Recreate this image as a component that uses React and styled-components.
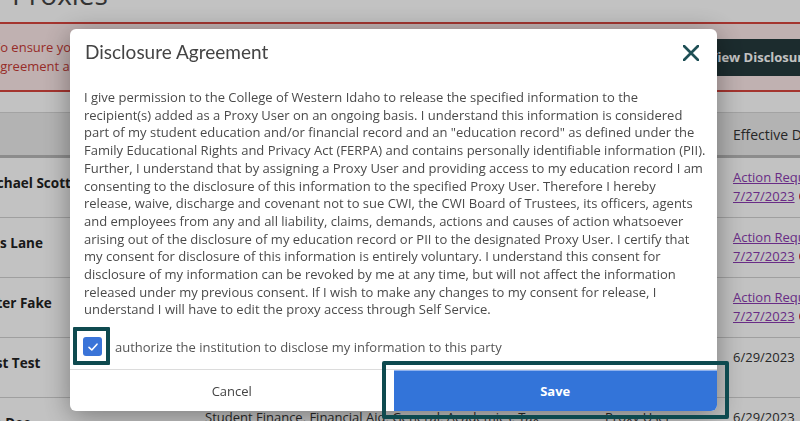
import React from 'react';
import styled, { createGlobalStyle } from 'styled-components';

const GlobalStyle = createGlobalStyle`
  html, body {
    margin: 0;
    padding: 0;
    width: 800px;
    height: 421px;
    overflow: hidden;
    background: #fff;
  }
  body {
    font-family: "Open Sans", "Liberation Sans", sans-serif;
  }
`;

const Page = styled.div`
  width: 1100px;
  margin: -30px 0 0 -30px;
  color: #333;
`;

const PageTitle = styled.h1`
  margin: 0;
  padding: 7px 0 0 42px;
  font-size: 28px;
  line-height: 34px;
  font-weight: 400;
  color: #444;
`;

const Alert = styled.div`
  margin-top: 11px;
  display: flex;
  align-items: center;
  height: 66px;
  padding-left: 23px;
  background: #fde9e9;
  border-top: 2px solid #d8463f;
  border-bottom: 2px solid #d8463f;
`;

const AlertText = styled.div`
  flex: 0 0 702px;
  font-size: 13px;
  line-height: 19px;
  color: #c73a35;
  white-space: nowrap;
`;

const DarkButton = styled.button`
  height: 37px;
  padding: 0 14px;
  border: none;
  border-radius: 3px;
  background: #253a3d;
  color: #fff;
  font-family: inherit;
  font-size: 13px;
  font-weight: 700;
  white-space: nowrap;
`;

const Table = styled.div`
  margin-top: 20px;
`;

const HeaderRow = styled.div`
  display: grid;
  grid-template-columns: 225px 400px 128px 1fr;
  padding-left: 10px;
  height: 42px;
  align-items: center;
  background: #ececec;
  border-top: 1px solid #d6d6d6;
  border-bottom: 3px solid #b9b9b9;
  font-size: 14px;
  color: #333;
`;

const Row = styled.div`
  display: grid;
  grid-template-columns: 225px 400px 128px 1fr;
  padding-left: 10px;
  height: 59px;
  border-bottom: 1px solid #d2d2d2;
  align-items: start;
`;

const Cell = styled.div`
  padding-top: 10px;
  font-size: 13px;
  line-height: 19px;
  color: #333;
  white-space: nowrap;
`;

const Name = styled(Cell)`
  padding-top: 16px;
  font-size: 13.5px;
  font-weight: 700;
  color: #222;
`;

const LinkLine = styled.div`
  display: flex;
  align-items: center;
  gap: 4px;
`;

const Link = styled.a`
  color: #8a3bb0;
  text-decoration: underline;
`;

const WarnDot = styled.span`
  display: inline-block;
  width: 13px;
  height: 13px;
  border-radius: 50%;
  background: #e0352e;
`;

const Overlay = styled.div`
  position: fixed;
  inset: 0;
  background: rgba(0, 0, 0, 0.24);
`;

const Modal = styled.div`
  position: fixed;
  left: 70px;
  top: 29px;
  width: 647px;
  background: #fff;
  border-radius: 6px;
  box-shadow: 0 5px 28px rgba(0, 0, 0, 0.38);
`;

const ModalHeader = styled.div`
  display: flex;
  align-items: center;
  justify-content: space-between;
  padding: 11px 18px 0 15px;
  height: 24px;
`;

const ModalTitle = styled.h2`
  margin: 0;
  font-family: "Lato", "Open Sans", sans-serif;
  font-size: 19px;
  line-height: 24px;
  font-weight: 400;
  color: #444;
`;

const CloseButton = styled.button`
  display: flex;
  padding: 0;
  border: none;
  background: none;
  margin-top: 2px;
`;

const ModalBody = styled.div`
  padding: 25px 14px 0 14px;
  font-size: 13px;
  line-height: 17.7px;
  color: #4a4a4a;
`;

const Line = styled.span`
  display: block;
  white-space: nowrap;
`;

const ConsentRow = styled.label`
  display: flex;
  align-items: center;
  height: 45px;
  margin-top: 5px;
  padding-left: 13px;
  font-size: 13px;
  color: #555;
`;

const Checkbox = styled.span`
  position: relative;
  display: flex;
  align-items: center;
  justify-content: center;
  width: 19px;
  height: 19px;
  border-radius: 3px;
  background: #3a74d8;
  margin-right: 13px;

  &::after {
    content: '';
    position: absolute;
    top: -10px;
    bottom: -9px;
    left: -10px;
    right: -8px;
    border: 4px solid #0e4a4f;
    border-radius: 1px;
  }
`;

const Footer = styled.div`
  display: grid;
  grid-template-columns: 1fr 1fr;
  height: 41px;
  border-top: 1px solid #dcdcdc;
`;

const FooterButton = styled.button`
  position: relative;
  border: none;
  font-family: "Open Sans", "Liberation Sans", sans-serif;
  font-size: 13px;
  background: ${(p) => (p.$primary ? '#3374d9' : 'transparent')};
  color: ${(p) => (p.$primary ? '#fff' : '#444')};
  font-weight: ${(p) => (p.$primary ? 700 : 400)};
  border-radius: ${(p) => (p.$primary ? '0 0 6px 0' : '0 0 0 6px')};
  border-top: ${(p) => (p.$primary ? '1px solid #8fb2ee' : 'none')};

  &::after {
    content: '';
    display: ${(p) => (p.$primary ? 'block' : 'none')};
    position: absolute;
    top: -10px;
    bottom: -8px;
    left: -12px;
    right: -12px;
    border: 4px solid #0e4a4f;
    border-radius: 2px;
  }
`;

const rows = [
  { name: 'Michael Scott', access: 'Student Finance, Financial Aid', action: true },
  { name: 'Lois Lane', access: 'Student Finance', action: true },
  { name: 'Peter Fake', access: 'Financial Aid, General', action: true },
  { name: 'Test Test', access: 'General, Academics', date: '6/29/2023' },
  { name: 'Jon Dee', access: 'Student Finance, Financial Aid, General, Academics, Tax', date: '6/29/2023' },
];

const agreement = [
  'I give permission to the College of Western Idaho to release the specified information to the',
  'recipient(s) added as a Proxy User on an ongoing basis. I understand this information is considered',
  'part of my student education and/or financial record and an "education record" as defined under the',
  'Family Educational Rights and Privacy Act (FERPA) and contains personally identifiable information (PII).',
  'Further, I understand that by assigning a Proxy User and providing access to my education record I am',
  'consenting to the disclosure of this information to the specified Proxy User. Therefore I hereby',
  'release, waive, discharge and covenant not to sue CWI, the CWI Board of Trustees, its officers, agents',
  'and employees from any and all liability, claims, demands, actions and causes of action whatsoever',
  'arising out of the disclosure of my education record or PII to the designated Proxy User. I certify that',
  'my consent for disclosure of this information is entirely voluntary. I understand this consent for',
  'disclosure of my information can be revoked by me at any time, but will not affect the information',
  'released under my previous consent. If I wish to make any changes to my consent for release, I',
  'understand I will have to edit the proxy access through Self Service.',
];

function App() {
  return (
    <>
      <GlobalStyle />
      <Page>
        <PageTitle>Proxies</PageTitle>
        <Alert>
          <AlertText>
            To ensure your proxies keep their access, please review the disclosure
            <br />
            agreement and save it for each proxy that requires action.
          </AlertText>
          <DarkButton>View Disclosure Agreement</DarkButton>
        </Alert>
        <Table>
          <HeaderRow>
            <div />
            <div>Access</div>
            <div>Role</div>
            <div>Effective Date</div>
          </HeaderRow>
          {rows.map((row, idx) => (
            <Row key={idx}>
              <Name>{row.name}</Name>
              <Cell>{row.access}</Cell>
              <Cell>Proxy User</Cell>
              <Cell>
                {row.action ? (
                  <>
                    <LinkLine>
                      <Link>Action Required</Link>
                    </LinkLine>
                    <LinkLine>
                      <Link>7/27/2023</Link>
                      <WarnDot />
                    </LinkLine>
                  </>
                ) : (
                  row.date
                )}
              </Cell>
            </Row>
          ))}
        </Table>
      </Page>
      <Overlay />
      <Modal>
        <ModalHeader>
          <ModalTitle>Disclosure Agreement</ModalTitle>
          <CloseButton aria-label="Close">
            <svg width="16" height="16" viewBox="0 0 16 16">
              <path d="M1 1 L15 15 M15 1 L1 15" stroke="#1e4f55" strokeWidth="2.7" strokeLinecap="round" />
            </svg>
          </CloseButton>
        </ModalHeader>
        <ModalBody>
          {agreement.map((line, idx) => (
            <Line key={idx}>{line}</Line>
          ))}
        </ModalBody>
        <ConsentRow>
          <Checkbox>
            <svg width="12" height="12" viewBox="0 0 12 12">
              <path d="M2 6.3 L4.8 9 L10 3.2" fill="none" stroke="#fff" strokeWidth="1.6" strokeLinecap="round" strokeLinejoin="round" />
            </svg>
          </Checkbox>
          authorize the institution to disclose my information to this party
        </ConsentRow>
        <Footer>
          <FooterButton>Cancel</FooterButton>
          <FooterButton $primary>Save</FooterButton>
        </Footer>
      </Modal>
    </>
  );
}

export default App;
